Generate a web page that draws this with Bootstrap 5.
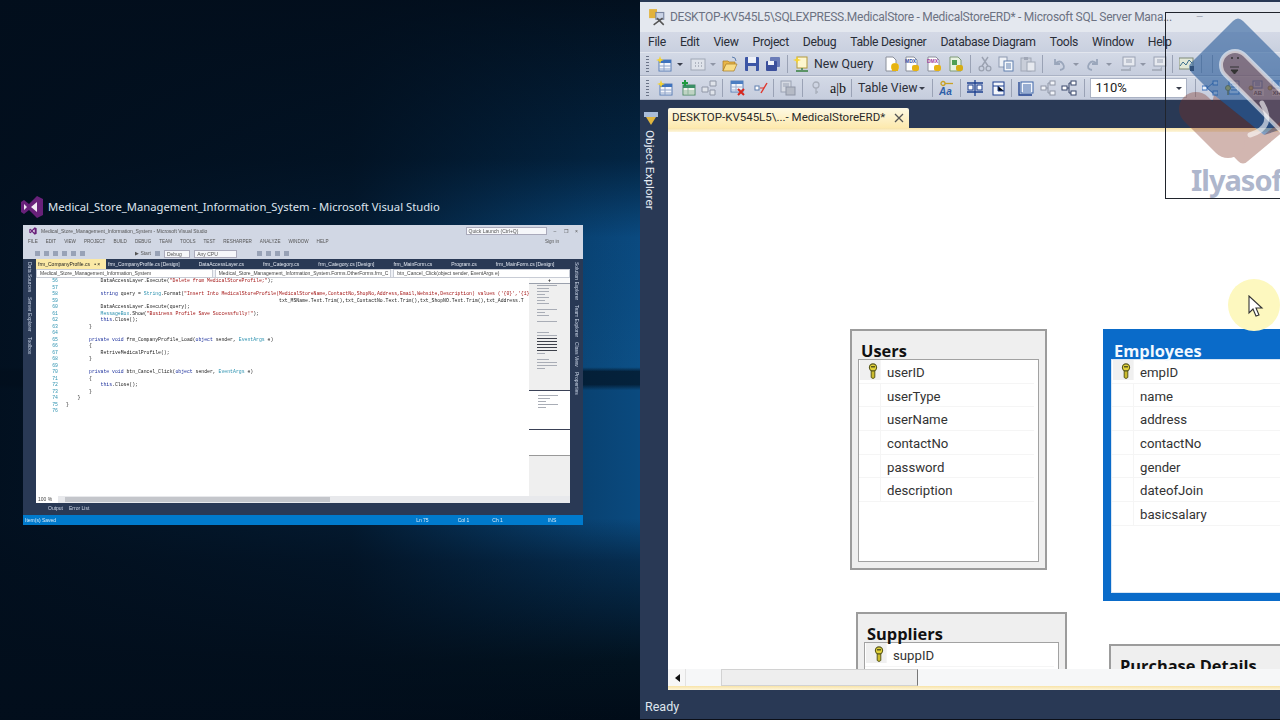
<!DOCTYPE html>
<html lang="en">
<head>
<meta charset="UTF-8">
<title>Medical Store ERD</title>
<link href="https://cdn.jsdelivr.net/npm/bootstrap@5.3.0/dist/css/bootstrap.min.css" rel="stylesheet">
<style>
    html, body { width: 1280px; height: 720px; overflow: hidden; background: #04101e; }
    body { font-family: "Noto Sans", sans-serif; }
    .screen { width: 1280px; height: 720px; }

    /* left: windows desktop with the task-view thumbnail */
    .desk { width: 640px; height: 720px; padding: 195px 0 0 20px;
        background:
            linear-gradient(90deg, rgba(2,14,28,.96) 0%, rgba(2,14,28,.8) 55%, rgba(2,14,28,.12) 92%, rgba(2,14,28,0) 100%),
            linear-gradient(180deg, #02101f 0, #032543 22%, #0a4a80 33%, #0c5087 51%, #04223c 51.6%, #04223c 53.4%, #0a4a7f 54.2%, #0a4a7f 72%, #062d50 78%, #02121f 92%, #010c18 100%); }
    .desk-head { height: 24px; color: #dfe5ee; font-size: 11.25px; }
    .thumb { width: 560px; height: 300px; margin: 6px 0 0 3px; background: #293955; color: #333; filter: blur(.35px); font-family: "Liberation Sans", sans-serif; font-size: 5px; line-height: 1; overflow: hidden; }
    .th-top { height: 34px; background: #d1d7e4; color: #555; }
    .th-title { height: 12px; padding: 0 5px 0 6px; white-space: nowrap; }
    .th-menu { height: 11px; padding-left: 5px; gap: 8px; font-size: 4.6px; white-space: nowrap; }
    .th-tools { height: 11px; padding-left: 12px; gap: 4px; white-space: nowrap; }
    .th-box { background: #f6f7fa; border: 1px solid #aab; height: 8px; padding: 0 2px; line-height: 6px; }
    .th-ql { width: 81px; margin-right: 7px; }
    .th-win { word-spacing: 6px; }
    .th-dot { width: 5px; height: 5px; background: #98a2b6; }
    .th-start { margin-left: 46px; }
    .th-body { height: 256px; }
    .th-rail { width: 13px; padding-top: 3px; gap: 5px; color: #c8d2e4; writing-mode: vertical-rl; line-height: 13px; white-space: nowrap; }
    .th-main { width: 534px; }
    .th-tabs { height: 10px; color: #e4e9f2; }
    .th-tab { padding: 0 9.5px; line-height: 10px; white-space: nowrap; }
    .th-tab-on { background: #fbe9a6; color: #222; width: 70px; padding: 0 2px; }
    .th-tab-on + .th-tab { padding-left: 2px; }
    .th-combos { height: 9px; background: #eef0f5; border-bottom: 1px solid #c9cdd6; gap: 2px; color: #444; }
    .th-combo { width: 177px; height: 9px; background: #fff; border: 1px solid #c8ccd5; line-height: 7px; padding-left: 3px; white-space: nowrap; overflow: hidden; }
    .th-edit { height: 218px; background: #fff; }
    .th-code { width: 493px; font-family: "Liberation Mono", monospace; font-size: 4.8px; line-height: 6.5px; color: #222; overflow: hidden; }
    .cl { height: 6.5px; white-space: pre; }
    .cl b { display: inline-block; width: 22px; margin-right: 8px; color: #2b91af; font-weight: 400; text-align: right; }
    .kw { color: #1b2f9c; }
    .st { color: #a31515; }
    .ty { color: #2b91af; }
    .th-map { width: 41px; background: #efefef; }
    .th-map-a { height: 112px; }
    .th-map-head { height: 6px; background: #fafafa; border-bottom: 1px solid #9aa0ac; text-align: center; line-height: 5px; color: #222; font-weight: 700; margin-bottom: 1px; }
    .th-map-rows { padding-left: 8px; }
    .th-map-a i, .th-map-b i { display: block; height: 1px; margin-bottom: 2px; background: #a9adb6; }
    .th-map-a i.dk { background: #3d404a; }
    .gp { margin-top: 5px; }
    .gp2 { margin-top: 10px; }
    .th-map-b { height: 40px; background: #fff; border-top: 1px solid #3a4156; border-bottom: 1px solid #3a4156; padding: 4px 0 0 9px; }
    .th-map-c { height: 26px; background: #fff; border-bottom: 1px solid #999; }
    .w-a { width: 12px; } .w-b { width: 20px; } .w-c { width: 8px; }
    .th-sb { height: 7px; background: #e8e9ec; }
    .th-sb-zoom { width: 22px; background: #fff; color: #444; line-height: 7px; padding-left: 2px; }
    .th-sb-thumb { width: 265px; height: 5px; margin: 1px 0 0 7px; background: #c4c6cb; }
    .th-out { height: 13px; color: #cfd7e6; gap: 6px; padding: 3px 0 0 12px; }
    .th-status { height: 10px; background: #007acc; color: #d9ecf9; line-height: 10px; padding-left: 2px; white-space: nowrap; }
    .st-a { margin-left: 360px; } .st-b { margin-left: 29px; } .st-c { margin-left: 23px; } .st-d { margin-left: 45px; }

    /* right: SSMS window */
    .ssms { width: 640px; height: 720px; position: relative; overflow: hidden; background: #293955; font-family: Roboto, sans-serif; }
    .ss-title { height: 30px; margin-top: 2px; padding-left: 8px; background: #e4e8ef; color: #6c7282; font-size: 12px; letter-spacing: -.28px; white-space: nowrap; }
    .ss-winbtn { margin-left: 24px; color: #a9afbb; }
    .ss-menu { height: 20px; padding-left: 8px; background: linear-gradient(#d4d9e6, #c9d0df); color: #2a2e38; font-size: 12.2px; letter-spacing: -.3px; white-space: nowrap; }
    .ss-menu span { margin-right: 14px; }
    .tb { height: 24px; background: linear-gradient(#d3d9e6, #c6cddd); border-top: 1px solid #e2e6ee; border-bottom: 1px solid #aab2c4; padding-left: 6px; white-space: nowrap; color: #2a2e38; font-size: 12.3px; }
    .tb-grip { width: 3px; height: 16px; flex: none; background: repeating-linear-gradient(#6b7488 0 1px, transparent 1px 3px); }
    .ti { width: 16px; height: 16px; flex: none; }
    .tc { width: 0; height: 0; flex: none; border: 3px solid transparent; border-top: 3px solid #3a3f4c; border-bottom: 0; }
    .tc-off { border-top-color: #8f96a6; }
    .ts { width: 1px; height: 18px; flex: none; background: #9aa2b5; }
    .tb-ab { font-family: "Liberation Serif", serif; font-size: 14px; color: #111; }
    .g2 { margin-left: 2px; } .g3 { margin-left: 3px; } .g4 { margin-left: 4px; } .g5 { margin-left: 5px; } .g6 { margin-left: 6px; } .g7 { margin-left: 7px; } .g8 { margin-left: 8px; } .g10 { margin-left: 10px; } .g11 { margin-left: 11px; }
    .tb-zoom { width: 97px; height: 20px; flex: none; background: #fff; border: 1px solid #aab2c4; padding-left: 4px; line-height: 18px; font-size: 13px; color: #222; }

    .ss-rail { width: 28px; flex: none; padding: 10px 0 0 3px; }
    .ss-rail svg { display: block; }
    .ss-rail-txt { writing-mode: vertical-rl; color: #e8edf5; font-size: 11.8px; line-height: 14px; margin: 4px 0 0 0; }
    .ss-doc { width: 612px; }
    .ss-tabs { height: 28px; padding-top: 8px; }
    .ss-tab { width: 241px; height: 20px; background: linear-gradient(#fdf9e4, #fde9ad); color: #2a2a2a; font-size: 11.5px; padding: 0 5px 0 4px; border-radius: 2px 2px 0 0; white-space: nowrap; }
    .ss-gold { height: 4px; background: linear-gradient(#f8e3a8, #fdf6dd); }
    .ss-canvas { height: 537px; background: #fff; position: relative; overflow: hidden; }
    .ss-hbar { height: 17px; background: #f6f7f8; }
    .ss-left { width: 17px; margin-left: 1px; border-right: 1px solid #e2e2e2; background: #f7f7f7; }
    .ss-left i { width: 0; height: 0; border: 4px solid transparent; border-right: 5px solid #111; border-left: 0; }
    .ss-thumb { width: 197px; margin-left: 35px; background: #eeeeee; border: 1px solid #d2d2d2; border-right: 1px solid #777; }
    .ss-status { height: 30px; padding: 6px 0 0 5px; color: #dfe5ee; font-size: 12.5px; border-bottom: 1px solid #0b0f18; }

    /* diagram nodes: free canvas, coordinates relative to the canvas at 668,132 */
    .er { position: absolute; background: #efefef; border: 2px solid #9c9c9c; padding: 0 6px 6px 6px; }
    .er-head { height: 28px; padding: 9px 0 0 3px; font-family: "Open Sans", sans-serif; font-weight: 700; font-size: 16.4px; line-height: 22px; color: #111; white-space: nowrap; overflow: visible; }
    .er-body { background: #fff; border: 1px solid #a2a2a2; height: calc(100% - 28px); padding: 0 4px 0 0; overflow: hidden; }
    .er-row { height: 23.7px; border-bottom: 1px solid #f5f5f5; color: #333; font-size: 13.2px; line-height: 26px; }
    .er-keycell { width: 21px; flex: none; margin-left: 1px; border-right: 1px solid #f5f5f5; }
    .er-keycell.on { background: #f0f0f0; height: 20px; }
    .er-keycell svg { display: block; margin: 3px 0 0 7px; }
    .er-name { padding-left: 6px; }
    .er-on { background: #0a6bc9; border-color: #0a6bc9; }
    .er-on .er-head { color: #f3f9ff; }
    .er-on .er-body { border-color: #d8e6f4; }
    #tUsers { left: 182px; top: 197px; width: 197px; height: 241px; }
    #tEmp { left: 435px; top: 197px; width: 260px; height: 272px; }
    #tSupp { left: 188px; top: 480px; width: 211px; height: 120px; }
    #tPurch { left: 441px; top: 512px; width: 260px; height: 120px; }
    .halo { position: absolute; left: 560px; top: 147px; width: 52px; height: 52px; border-radius: 50%; background: #fdf8bf; }
    .arrow { position: absolute; left: 580px; top: 163px; }

    /* channel watermark sits over the window */
    .mark-wm { position: absolute; left: 525px; top: 12px; width: 115px; height: 187px; border: 1px solid #20242c; border-right: 0; overflow: hidden; }
    .mark-wm svg { display: block; }
</style>
</head>
<body>
<svg width="0" height="0" class="position-absolute">
    <defs>
        <symbol id="i-grid" viewBox="0 0 16 16"><rect x="2" y="3" width="13" height="11" fill="#f4f6fb" stroke="#6e86b4"/><rect x="2" y="3" width="13" height="3" fill="#5f87c8"/><path d="M2 9h13M2 12h13M6 6v8M11 6v8" stroke="#8ea3c8"/></symbol>
        <symbol id="i-new" viewBox="0 0 16 16"><rect x="3" y="4" width="12" height="11" fill="#f4f6fb" stroke="#5b7fb5"/><rect x="3" y="4" width="12" height="3" fill="#3f73bd"/><path d="M3 10h12M3 13h12M8 7v8" stroke="#8ea3c8"/><path d="M4 0l1 3 3 1-3 1-1 3-1-3-3-1 3-1z" fill="#f6d330"/></symbol>
        <symbol id="i-add" viewBox="0 0 16 16"><rect x="3" y="5" width="12" height="10" fill="#f0f4ec" stroke="#4f8a66"/><rect x="3" y="5" width="12" height="3" fill="#3a8f66"/><path d="M3 11h12M3 13h12M8 8v7" stroke="#8eb39c"/><path d="M2 3h6M5 0v6" stroke="#1f9a3f" stroke-width="2"/></symbol>
        <symbol id="i-ghost" viewBox="0 0 16 16"><path d="M9 1h6v5H9zM1 7h6v5H1zM9 10h5v5H9z" fill="#dfe3ea" stroke="#8f96a6"/></symbol>
        <symbol id="i-mini" viewBox="0 0 16 16"><rect x="1" y="3" width="14" height="11" fill="#dfe3ea" stroke="#a0a7b6"/><path d="M5 7h1M8 7h1M11 7h1M5 10h1M8 10h1M11 10h1" stroke="#808796"/></symbol>
        <symbol id="i-folder" viewBox="0 0 16 16"><path d="M1 5h5l1 1h6v3H4l-3 6z" fill="#e8b64a" stroke="#a6791f" stroke-width=".7"/><path d="M1 15l3-7h11l-3 7z" fill="#f8dc86" stroke="#a6791f" stroke-width=".7"/><path d="M10 1q4 0 4 4" fill="none" stroke="#5f7fae"/></symbol>
        <symbol id="i-save" viewBox="0 0 16 16"><rect x="1" y="1" width="14" height="14" rx="1" fill="#3b55a6"/><rect x="4" y="1" width="8" height="6" fill="#eef1f8"/><rect x="4" y="10" width="8" height="5" fill="#c8cfdd"/></symbol>
        <symbol id="i-saveall" viewBox="0 0 16 16"><rect x="5" y="1" width="10" height="10" rx="1" fill="#6a7cb8"/><rect x="1" y="5" width="11" height="10" rx="1" fill="#3b4f9c"/><rect x="3" y="5" width="6" height="4" fill="#eef1f8"/></symbol>
        <symbol id="i-query" viewBox="0 0 16 16"><rect x="4" y="1" width="10" height="11" fill="#fdf6cf" stroke="#b49a3c"/><path d="M4 0l1 3 3 1-3 1-1 3-1-3-3-1 3-1z" fill="#f6d330"/><path d="M9 12v2M3 15h12" stroke="#37803f" stroke-width="1.4"/></symbol>
        <symbol id="i-doc" viewBox="0 0 16 16"><path d="M2 1h7l3 3v11H2z" fill="#fff" stroke="#8a8f9a"/><ellipse cx="11" cy="11" rx="4" ry="4" fill="#f1c21b"/><rect x="8" y="8" width="6" height="7" fill="#e6b312"/></symbol>
        <symbol id="i-mdx" viewBox="0 0 16 16"><path d="M2 1h8l3 3v11H2z" fill="#fff" stroke="#8a8f9a"/><text x="1" y="7" font-family="Liberation Sans" font-size="5" font-weight="700" fill="#3850a0">MDX</text><rect x="8" y="9" width="7" height="6" rx="2" fill="#e6b312"/></symbol>
        <symbol id="i-dmx" viewBox="0 0 16 16"><path d="M2 1h8l3 3v11H2z" fill="#fff" stroke="#8a8f9a"/><text x="1" y="7" font-family="Liberation Sans" font-size="5" font-weight="700" fill="#a03c9a">DMX</text><rect x="8" y="9" width="7" height="6" rx="2" fill="#e6b312"/></symbol>
        <symbol id="i-xml" viewBox="0 0 16 16"><path d="M2 1h8l3 3v11H2z" fill="#e8f3e2" stroke="#7f9a78"/><path d="M4 4h5v5H4z" fill="#4f9f55"/><rect x="8" y="9" width="7" height="6" rx="2" fill="#d6ad14"/></symbol>
        <symbol id="i-cut" viewBox="0 0 16 16"><path d="M5 1l6 9M11 1l-6 9" stroke="#9ba2b1" stroke-width="1.4"/><circle cx="4.5" cy="12.5" r="2.4" fill="none" stroke="#9ba2b1" stroke-width="1.3"/><circle cx="11.5" cy="12.5" r="2.4" fill="none" stroke="#9ba2b1" stroke-width="1.3"/></symbol>
        <symbol id="i-copy" viewBox="0 0 16 16"><rect x="1" y="1" width="8" height="10" fill="#eef1f6" stroke="#8d99b0"/><rect x="6" y="5" width="9" height="10" fill="#f6f8fb" stroke="#5f7fae"/><path d="M8 8h5M8 10h5M8 12h5" stroke="#5f7fae"/></symbol>
        <symbol id="i-paste" viewBox="0 0 16 16"><rect x="1" y="2" width="10" height="13" fill="#c9ced9" stroke="#a0a7b6"/><rect x="4" y="1" width="4" height="3" fill="#a0a7b6"/><rect x="7" y="6" width="8" height="9" fill="#e6e9ef" stroke="#a0a7b6"/></symbol>
        <symbol id="i-undo" viewBox="0 0 16 16"><path d="M4 3v5h5M4 8q5-5 8 0t-3 6" fill="none" stroke="#9aa6bb" stroke-width="1.8"/></symbol>
        <symbol id="i-redo" viewBox="0 0 16 16"><path d="M12 3v5H7M12 8q-5-5-8 0t3 6" fill="none" stroke="#9aa6bb" stroke-width="1.8"/></symbol>
        <symbol id="i-dbg" viewBox="0 0 16 16"><rect x="3" y="1" width="12" height="9" fill="#e6e9ef" stroke="#9aa2b3"/><path d="M6 4h6M6 6h6" stroke="#9aa2b3"/><path d="M1 13h8l2-3v5H1z" fill="#a9b0be"/></symbol>
        <symbol id="i-chart" viewBox="0 0 16 16"><rect x="0" y="2" width="14" height="11" fill="#e2e8d8" stroke="#7f8a78"/><path d="M1 10l3-4 3 3 3-5 3 3" fill="none" stroke="#3d6e8f"/><rect x="11" y="10" width="4" height="5" fill="#3a3f4c"/></symbol>
        <symbol id="i-tblx" viewBox="0 0 16 16"><rect x="1" y="1" width="12" height="11" fill="#f2f5fb" stroke="#5b7fb5"/><rect x="1" y="1" width="12" height="3" fill="#4c7ec2"/><path d="M1 7h12M1 10h12M6 4v8" stroke="#9fb2d2"/><path d="M8 9l6 6M14 9l-6 6" stroke="#d8261c" stroke-width="2"/></symbol>
        <symbol id="i-rel" viewBox="0 0 16 16"><rect x="2" y="6" width="4" height="4" fill="#fff" stroke="#5f7fae"/><path d="M8 13l6-10" stroke="#e0352b" stroke-width="1.4"/><path d="M7 8h4" stroke="#e0352b"/></symbol>
        <symbol id="i-grey" viewBox="0 0 16 16"><rect x="1" y="1" width="10" height="11" fill="#d5d9e2" stroke="#9aa2b3"/><rect x="6" y="7" width="9" height="8" fill="#b5bac5" stroke="#8f96a6"/><path d="M3 4h6M3 6h6" stroke="#9aa2b3"/></symbol>
        <symbol id="i-keyo" viewBox="0 0 16 16"><circle cx="8" cy="5" r="3" fill="none" stroke="#a8aeba" stroke-width="1.3"/><path d="M8 8v6M8 12h2" stroke="#a8aeba" stroke-width="1.3"/></symbol>
        <symbol id="i-aa" viewBox="0 0 16 16"><circle cx="4" cy="3.5" r="2" fill="none" stroke="#c9a227" stroke-width="1.3"/><path d="M6 3.5h8" stroke="#c9a227" stroke-width="1.3"/><text x="0" y="15" font-family="Liberation Sans" font-size="10" font-style="italic" font-weight="700" fill="#2e5fa8">Aa</text></symbol>
        <symbol id="i-align" viewBox="0 0 16 16"><path d="M8 0v16M0 3h16M0 12h16" stroke="#1c3f8f" stroke-width="1.3"/><rect x="1" y="5" width="5" height="5" fill="#fff" stroke="#1c3f8f"/><rect x="10" y="5" width="5" height="5" fill="#fff" stroke="#1c3f8f"/></symbol>
        <symbol id="i-tsize" viewBox="0 0 16 16"><rect x="2" y="2" width="11" height="13" fill="#f5f7fb" stroke="#1c3f8f"/><path d="M2 6h11M7 6v5h6" stroke="#1c3f8f"/></symbol>
        <symbol id="i-layout" viewBox="0 0 16 16"><rect x="3" y="2" width="12" height="11" fill="#f3f6fb" stroke="#3d65a8"/><path d="M5 5h8M5 7h8M5 9h8M5 11h8" stroke="#3d65a8"/><path d="M1 2v13h13" fill="none" stroke="#1c3f8f" stroke-width="1.3"/></symbol>
        <symbol id="i-tree" viewBox="0 0 16 16"><rect x="1" y="6" width="5" height="4" fill="#f1f3f8" stroke="#8f96a6"/><rect x="10" y="1" width="5" height="4" fill="#f1f3f8" stroke="#8f96a6"/><rect x="10" y="11" width="5" height="4" fill="#f1f3f8" stroke="#8f96a6"/><path d="M6 8h2V3h2M8 8v5h2" fill="none" stroke="#8f96a6"/></symbol>
        <symbol id="i-tree2" viewBox="0 0 16 16"><rect x="1" y="6" width="5" height="4" fill="#fff" stroke="#39476b"/><rect x="10" y="1" width="5" height="4" fill="#fff" stroke="#39476b"/><rect x="10" y="11" width="5" height="4" fill="#fff" stroke="#39476b"/><path d="M6 8h2V3h2M8 8v5h2" fill="none" stroke="#39476b"/></symbol>
        <symbol id="i-share" viewBox="0 0 16 16"><rect x="0" y="6" width="5" height="4" fill="#eaf1fb" stroke="#3a6fb8"/><rect x="11" y="1" width="5" height="4" fill="#eaf1fb" stroke="#3a6fb8"/><rect x="11" y="11" width="5" height="4" fill="#eaf1fb" stroke="#3a6fb8"/><path d="M5 8l6-5M5 8l6 5" stroke="#3a6fb8"/></symbol>
        <symbol id="i-klist" viewBox="0 0 16 16"><rect x="5" y="1" width="10" height="13" fill="#dbe6f5" stroke="#3a6fb8"/><path d="M7 4h6M7 7h6M7 10h6" stroke="#3a6fb8"/><circle cx="4" cy="8" r="2.5" fill="#e8c92f" stroke="#8a7a1c"/><path d="M4 10v5" stroke="#8a7a1c" stroke-width="1.5"/></symbol>
        <symbol id="i-kab" viewBox="0 0 16 16"><rect x="5" y="1" width="9" height="7" fill="#dbe6f5" stroke="#3a6fb8"/><path d="M7 3h5M7 5h5" stroke="#3a6fb8"/><circle cx="3" cy="8" r="2" fill="#e8c92f" stroke="#8a7a1c"/><rect x="5" y="9" width="11" height="7" fill="#fff"/><text x="5.5" y="15" font-family="Liberation Sans" font-size="6" font-weight="700" fill="#222">AB</text></symbol>
        <symbol id="i-kxh" viewBox="0 0 16 16"><rect x="5" y="1" width="9" height="7" fill="#dbe6f5" stroke="#3a6fb8"/><path d="M7 3h5M7 5h5" stroke="#3a6fb8"/><circle cx="3" cy="8" r="2" fill="#e8c92f" stroke="#8a7a1c"/><rect x="5" y="9" width="11" height="7" fill="#fff"/><text x="5.5" y="15" font-family="Liberation Sans" font-size="6" font-weight="700" fill="#222">XH</text></symbol>
        <symbol id="i-key" viewBox="0 0 12 16"><circle cx="6" cy="4.5" r="3.6" fill="#e2d23a" stroke="#59581a" stroke-width="1.1"/><rect x="4" y="3" width="4" height="1.5" fill="#59581a"/><path d="M4.2 8h3.6v6.5L6 15.5 4.2 14.5z" fill="#cbbb2c" stroke="#59581a"/></symbol>
        <symbol id="i-vs" viewBox="0 0 24 24"><path d="M17 1l6 3v16l-6 3-8-8-5 4-3-2V7l3-2 5 4z" fill="#68217a"/><path d="M17 7v10l-6-5zM4 9l3 3-3 3z" fill="#f1e8f4"/></symbol>
    </defs>
</svg>

<div class="screen d-flex">
    <!-- task view on the desktop -->
    <div class="desk">
        <div class="desk-head d-flex align-items-center gap-1">
            <svg width="24" height="24"><use href="#i-vs"/></svg>
            <span>Medical_Store_Management_Information_System - Microsoft Visual Studio</span>
        </div>
        <div class="thumb">
            <div class="th-top">
                <div class="th-title d-flex align-items-center">
                    <svg width="8" height="8" class="me-1"><use href="#i-vs"/></svg>
                    <span>Medical_Store_Management_Information_System - Microsoft Visual Studio</span>
                    <span class="th-box th-ql ms-auto">Quick Launch (Ctrl+Q)</span>
                    <span class="th-win">&ndash; &#10064; &times;</span>
                </div>
                <div class="th-menu d-flex align-items-center">
                    <span>FILE</span><span>EDIT</span><span>VIEW</span><span>PROJECT</span><span>BUILD</span><span>DEBUG</span><span>TEAM</span><span>TOOLS</span><span>TEST</span><span>RESHARPER</span><span>ANALYZE</span><span>WINDOW</span><span>HELP</span>
                    <span class="ms-auto me-4">Sign in</span>
                </div>
                <div class="th-tools d-flex align-items-center">
                    <i class="th-dot"></i><i class="th-dot"></i><i class="th-dot"></i><i class="th-dot"></i><i class="th-dot"></i><i class="th-dot"></i>
                    <span class="th-start">&#9654; Start</span><i class="th-dot"></i>
                    <span class="th-box">Debug &nbsp; &nbsp;</span>
                    <span class="th-box">Any CPU &nbsp; &nbsp; &nbsp; &nbsp; &nbsp; &nbsp;</span>
                    <i class="th-dot ms-3"></i><i class="th-dot"></i><i class="th-dot"></i><i class="th-dot"></i>
                </div>
            </div>
            <div class="th-body d-flex">
                <div class="th-rail d-flex"><span>Data Sources</span><span>Server Explorer</span><span>Toolbox</span></div>
                <div class="th-main">
                    <div class="th-tabs d-flex">
                        <span class="th-tab th-tab-on">frm_CompanyProfile.cs &nbsp; &#8226; &times;</span>
                        <span class="th-tab">frm_CompanyProfile.cs [Design]</span>
                        <span class="th-tab">DataAccessLayer.cs</span>
                        <span class="th-tab">frm_Category.cs</span>
                        <span class="th-tab">frm_Category.cs [Design]</span>
                        <span class="th-tab">frm_MainForm.cs</span>
                        <span class="th-tab">Program.cs</span>
                        <span class="th-tab">frm_MainForm.cs [Design]</span>
                    </div>
                    <div class="th-combos d-flex">
                        <span class="th-combo">Medical_Store_Management_Information_System</span>
                        <span class="th-combo">Medical_Store_Management_Information_System.Forms.OtherForms.frm_C</span>
                        <span class="th-combo">btn_Cancel_Click(object sender, EventArgs e)</span>
                    </div>
                    <div class="th-edit d-flex">
                        <div class="th-code">
<div class="cl"><b>56</b>            DataAccessLayer.Execute(<span class="st">"Delete from MedicalStoreProfile;"</span>);</div>
<div class="cl"><b>57</b></div>
<div class="cl"><b>58</b>            <span class="kw">string</span> query = <span class="ty">String</span>.Format(<span class="st">"Insert Into MedicalStoreProfile(MedicalStoreName,ContactNo,ShopNo,Address,Email,Website,Description) values ('{0}','{1}</span></div>
<div class="cl"><b>59</b>                                                                          txt_MSName.Text.Trim(),txt_ContactNo.Text.Trim(),txt_ShopNO.Text.Trim(),txt_Address.T</div>
<div class="cl"><b>60</b>            DataAccessLayer.Execute(query);</div>
<div class="cl"><b>61</b>            <span class="ty">MessageBox</span>.Show(<span class="st">"Business Profile Save Successfully!"</span>);</div>
<div class="cl"><b>62</b>            <span class="kw">this</span>.Close();</div>
<div class="cl"><b>63</b>        }</div>
<div class="cl"><b>64</b></div>
<div class="cl"><b>65</b>        <span class="kw">private void</span> frm_CompanyProfile_Load(<span class="kw">object</span> sender, <span class="ty">EventArgs</span> e)</div>
<div class="cl"><b>66</b>        {</div>
<div class="cl"><b>67</b>            RetriveMedicalProfile();</div>
<div class="cl"><b>68</b>        }</div>
<div class="cl"><b>69</b></div>
<div class="cl"><b>70</b>        <span class="kw">private void</span> btn_Cancel_Click(<span class="kw">object</span> sender, <span class="ty">EventArgs</span> e)</div>
<div class="cl"><b>71</b>        {</div>
<div class="cl"><b>72</b>            <span class="kw">this</span>.Close();</div>
<div class="cl"><b>73</b>        }</div>
<div class="cl"><b>74</b>    }</div>
<div class="cl"><b>75</b>}</div>
<div class="cl"><b>76</b></div>
                        </div>
                        <div class="th-map">
                            <div class="th-map-a">
                                <div class="th-map-head">+</div>
                                <div class="th-map-rows">
                                    <i class="w-b"></i><i class="w-a"></i><i class="w-a"></i><i class="w-c"></i><i class="w-a"></i><i class="w-c"></i><i class="w-a"></i>
                                    <i class="w-b gp"></i><i class="w-c"></i><i class="w-a"></i>
                                    <i class="w-b gp"></i>
                                    <i class="w-a gp2"></i><i class="w-b"></i><i class="w-b dk"></i><i class="w-b dk"></i><i class="w-b dk"></i><i class="w-b dk"></i><i class="w-b dk"></i><i class="w-c"></i>
                                    <i class="w-a gp"></i><i class="w-b"></i><i class="w-b"></i><i class="w-c"></i>
                                </div>
                            </div>
                            <div class="th-map-b"><i class="w-b"></i><i class="w-a"></i><i class="w-c"></i><i class="w-b"></i><i class="w-c"></i></div>
                            <div class="th-map-c"></div>
                        </div>
                    </div>
                    <div class="th-sb d-flex">
                        <span class="th-sb-zoom">100 %</span>
                        <span class="th-sb-thumb"></span>
                    </div>
                    <div class="th-out d-flex"><span>Output</span><span>Error List</span></div>
                </div>
                <div class="th-rail d-flex"><span>Solution Explorer</span><span>Team Explorer</span><span>Class View</span><span>Properties</span></div>
            </div>
            <div class="th-status d-flex">
                <span>Item(s) Saved</span><span class="st-a">Ln 75</span><span class="st-b">Col 1</span><span class="st-c">Ch 1</span><span class="st-d">INS</span>
            </div>
        </div>
    </div>

    <!-- SQL Server Management Studio -->
    <div class="ssms d-flex flex-column">
        <div class="ss-title d-flex align-items-center flex-shrink-0">
            <svg width="18" height="18" viewBox="0 0 16 16" class="me-1"><rect x="1" y="1" width="7" height="8" fill="#e2b23c"/><rect x="7" y="4" width="7" height="6" fill="#c9d3e6" stroke="#7a86a0"/><path d="M5 15l8-6M8 9l6 6" stroke="#555" stroke-width="1.3"/></svg>
            <span>DESKTOP-KV545L5\SQLEXPRESS.MedicalStore - MedicalStoreERD* - Microsoft SQL Server Mana...</span>
            <span class="ss-winbtn">&ndash;</span>
        </div>
        <div class="ss-menu d-flex align-items-center flex-shrink-0">
            <span>File</span><span>Edit</span><span>View</span><span>Project</span><span>Debug</span><span>Table Designer</span><span>Database Diagram</span><span>Tools</span><span>Window</span><span>Help</span>
        </div>
        <!-- standard toolbar -->
        <div class="tb d-flex align-items-center flex-shrink-0">
            <i class="tb-grip"></i>
            <svg class="ti g7"><use href="#i-new"/></svg><i class="tc g5"></i>
            <svg class="ti g7"><use href="#i-mini"/></svg><i class="tc tc-off g4"></i>
            <svg class="ti g6"><use href="#i-folder"/></svg>
            <svg class="ti g6"><use href="#i-save"/></svg>
            <svg class="ti g5"><use href="#i-saveall"/></svg>
            <i class="ts g6"></i>
            <svg class="ti g5"><use href="#i-query"/></svg>
            <span class="g5">New Query</span>
            <svg class="ti g11"><use href="#i-doc"/></svg>
            <svg class="ti g4"><use href="#i-mdx"/></svg>
            <svg class="ti g6"><use href="#i-dmx"/></svg>
            <svg class="ti g6"><use href="#i-xml"/></svg>
            <i class="ts g6"></i>
            <svg class="ti g6"><use href="#i-cut"/></svg>
            <svg class="ti g5"><use href="#i-copy"/></svg>
            <svg class="ti g6"><use href="#i-paste"/></svg>
            <i class="ts g6"></i>
            <svg class="ti g8"><use href="#i-undo"/></svg><i class="tc tc-off g6"></i>
            <svg class="ti g6"><use href="#i-redo"/></svg><i class="tc tc-off g5"></i>
            <svg class="ti g8"><use href="#i-dbg"/></svg><i class="tc tc-off g4"></i>
            <svg class="ti g5"><use href="#i-dbg"/></svg>
            <i class="ts g5"></i>
            <svg class="ti g6"><use href="#i-chart"/></svg>
            <i class="ts g6"></i>
            <i class="ts g10"></i>
        </div>
        <!-- table designer / diagram toolbar -->
        <div class="tb d-flex align-items-center flex-shrink-0">
            <i class="tb-grip"></i>
            <svg class="ti g8"><use href="#i-new"/></svg>
            <svg class="ti g7"><use href="#i-add"/></svg>
            <svg class="ti g5"><use href="#i-ghost"/></svg>
            <i class="ts g5"></i>
            <svg class="ti g7"><use href="#i-tblx"/></svg>
            <svg class="ti g7"><use href="#i-rel"/></svg>
            <i class="ts g4"></i>
            <svg class="ti g6"><use href="#i-grey"/></svg>
            <i class="ts g6"></i>
            <svg class="ti g5"><use href="#i-keyo"/></svg>
            <span class="g6 tb-ab">a|b</span>
            <i class="ts g5"></i>
            <span class="g6">Table View</span><i class="tc g2"></i>
            <i class="ts g7"></i>
            <svg class="ti g6"><use href="#i-aa"/></svg>
            <i class="ts g5"></i>
            <svg class="ti g6"><use href="#i-align"/></svg>
            <svg class="ti g8"><use href="#i-tsize"/></svg>
            <i class="ts g4"></i>
            <svg class="ti g6"><use href="#i-layout"/></svg>
            <svg class="ti g6"><use href="#i-tree"/></svg>
            <svg class="ti g5"><use href="#i-tree2"/></svg>
            <i class="ts g7"></i>
            <span class="tb-zoom g5 d-flex align-items-center">110%<i class="tc ms-auto me-1"></i></span>
            <i class="ts g8"></i>
            <svg class="ti g6"><use href="#i-share"/></svg>
            <svg class="ti g6"><use href="#i-klist"/></svg>
            <svg class="ti g8"><use href="#i-kab"/></svg>
            <svg class="ti g3"><use href="#i-kxh"/></svg>
        </div>

        <div class="d-flex flex-grow-1">
            <div class="ss-rail">
                <svg width="16" height="16" viewBox="0 0 16 16"><rect x="1" y="2" width="14" height="5" fill="#a9bcd8"/><path d="M3 7l5 8 5-8z" fill="#e0b640"/></svg>
                <div class="ss-rail-txt">Object Explorer</div>
            </div>
            <div class="ss-doc d-flex flex-column">
                <div class="ss-tabs flex-shrink-0">
                    <div class="ss-tab d-flex align-items-center justify-content-between">
                        <span>DESKTOP-KV545L5\...- MedicalStoreERD*</span>
                        <svg width="10" height="10" viewBox="0 0 10 10"><path d="M1 1l8 8M9 1l-8 8" stroke="#555" stroke-width="1.3"/></svg>
                    </div>
                </div>
                <div class="ss-gold flex-shrink-0"></div>
                <div class="ss-canvas flex-shrink-0">
                    <div class="er" id="tUsers">
                        <div class="er-head">Users</div>
                        <div class="er-body">
                            <div class="er-row d-flex"><span class="er-keycell on"><svg width="12" height="16"><use href="#i-key"/></svg></span><span class="er-name">userID</span></div>
                            <div class="er-row d-flex"><span class="er-keycell"></span><span class="er-name">userType</span></div>
                            <div class="er-row d-flex"><span class="er-keycell"></span><span class="er-name">userName</span></div>
                            <div class="er-row d-flex"><span class="er-keycell"></span><span class="er-name">contactNo</span></div>
                            <div class="er-row d-flex"><span class="er-keycell"></span><span class="er-name">password</span></div>
                            <div class="er-row d-flex"><span class="er-keycell"></span><span class="er-name">description</span></div>
                        </div>
                    </div>
                    <div class="er er-on" id="tEmp">
                        <div class="er-head">Employees</div>
                        <div class="er-body">
                            <div class="er-row d-flex"><span class="er-keycell on"><svg width="12" height="16"><use href="#i-key"/></svg></span><span class="er-name">empID</span></div>
                            <div class="er-row d-flex"><span class="er-keycell"></span><span class="er-name">name</span></div>
                            <div class="er-row d-flex"><span class="er-keycell"></span><span class="er-name">address</span></div>
                            <div class="er-row d-flex"><span class="er-keycell"></span><span class="er-name">contactNo</span></div>
                            <div class="er-row d-flex"><span class="er-keycell"></span><span class="er-name">gender</span></div>
                            <div class="er-row d-flex"><span class="er-keycell"></span><span class="er-name">dateofJoin</span></div>
                            <div class="er-row d-flex"><span class="er-keycell"></span><span class="er-name">basicsalary</span></div>
                        </div>
                    </div>
                    <div class="er" id="tSupp">
                        <div class="er-head">Suppliers</div>
                        <div class="er-body">
                            <div class="er-row d-flex"><span class="er-keycell on"><svg width="12" height="16"><use href="#i-key"/></svg></span><span class="er-name">suppID</span></div>
                        </div>
                    </div>
                    <div class="er" id="tPurch">
                        <div class="er-head">Purchase Details</div>
                    </div>
                    <div class="halo"></div>
                    <svg class="arrow" width="16" height="22" viewBox="0 0 16 22"><path d="M1 1v17l4-4 3 7 3-1-3-7h6z" fill="#fff" stroke="#333" stroke-width="1.1"/></svg>
                </div>
                <div class="ss-hbar d-flex flex-shrink-0">
                    <span class="ss-left d-flex align-items-center justify-content-center"><i></i></span>
                    <span class="ss-thumb"></span>
                </div>
                <div class="ss-gold flex-shrink-0"></div>
            </div>
        </div>
        <div class="ss-status d-flex align-items-center flex-shrink-0">Ready</div>

        <div class="mark-wm">
            <svg width="115" height="186" viewBox="0 0 115 186">
                <path d="M67 8Q72 3 77 8L135 66V110L98 122 48 82 26 60Q20 54 26 49Z" fill="#2a5c9a" fill-opacity=".6"/>
                <g opacity=".35">
                    <path d="M48 82L98 122 125 100V112L82 148Q77 153 72 148L40 115Z" fill="#803020"/>
                    <path d="M30 96L62 128" stroke="#803020" stroke-width="34" stroke-linecap="round"/>
                </g>
                <rect x="55" y="38" width="110" height="28" rx="14" transform="rotate(45 69 52)" fill="#a04a38" fill-opacity=".4" stroke="#fff" stroke-opacity=".6" stroke-width="4"/>
                <path d="M96 90Q110 114 84 122" fill="none" stroke="#fff" stroke-opacity=".6" stroke-width="5" stroke-linecap="round"/>
                <circle cx="66" cy="45" r="1" fill="#333"/><circle cx="72" cy="45" r="1" fill="#333"/>
                <path d="M64 54h9M65 57h7l-3.5 4z" stroke="#333" fill="#333"/>
                <text x="25" y="178" font-family="Noto Sans, sans-serif" font-weight="700" font-size="29" letter-spacing="-1" fill="#aeb6cc">Ilyasof</text>
            </svg>
        </div>
    </div>
</div>
<script src="https://cdn.jsdelivr.net/npm/bootstrap@5.3.0/dist/js/bootstrap.bundle.min.js"></script>
</body>
</html>
